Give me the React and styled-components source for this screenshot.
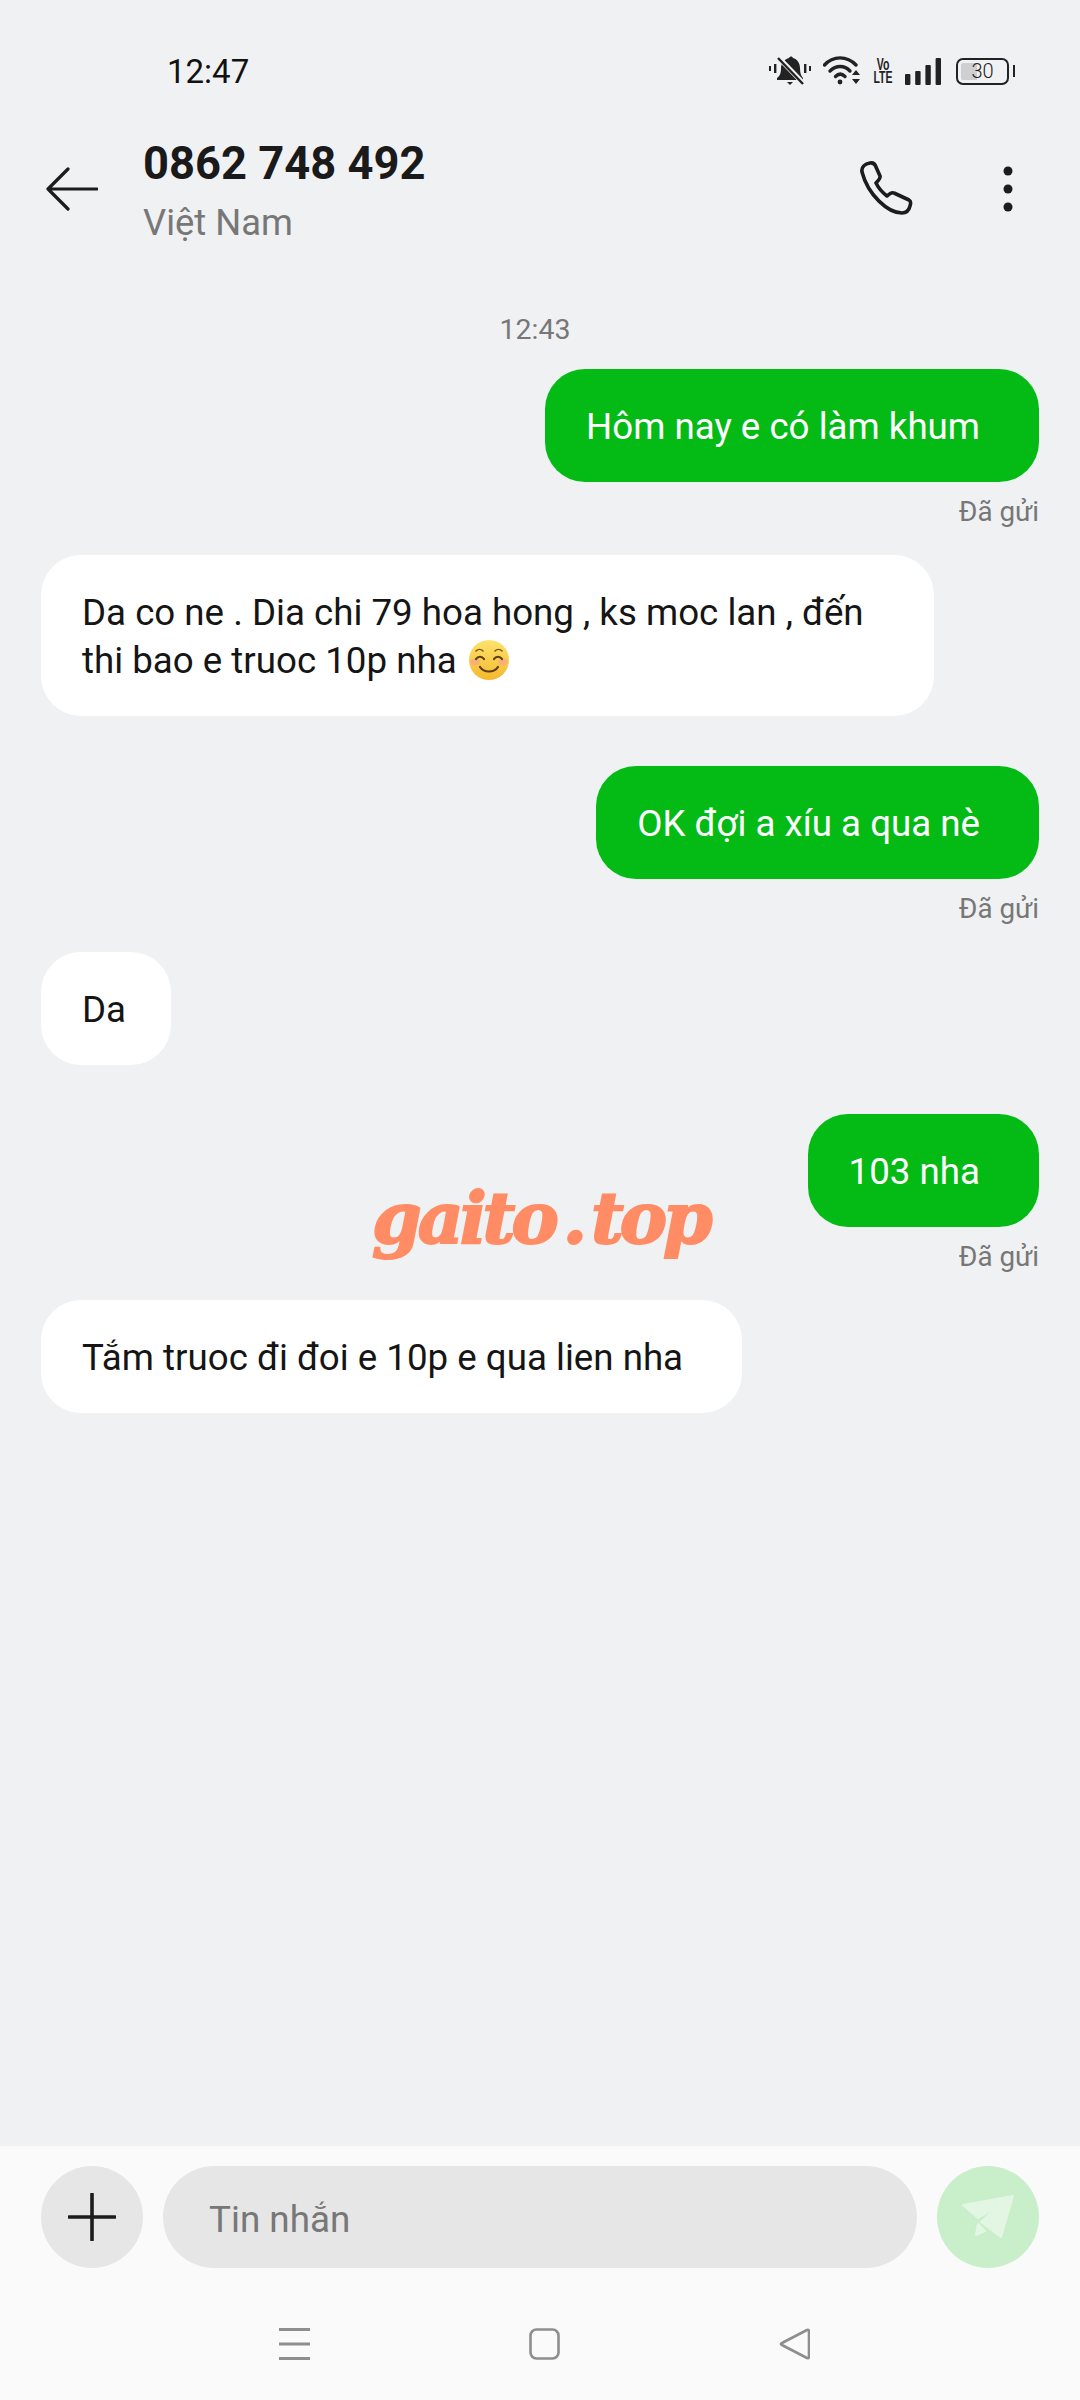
import React from 'react'
import styled, { createGlobalStyle } from 'styled-components'

const GlobalStyle = createGlobalStyle`
  * { box-sizing: border-box; }
  html, body { margin: 0; padding: 0; background: #f0f1f3; }
  body { font-family: Roboto, "Liberation Sans", sans-serif; }
`

const Screen = styled.div`
  position: relative;
  width: 1080px;
  height: 2400px;
  display: flex;
  flex-direction: column;
  background: #f0f1f3;
  overflow: hidden;
`
const StatusBar = styled.div`
  height: 126px;
  flex: none;
  display: flex;
  justify-content: space-between;
  align-items: flex-start;
  padding: 52px 67px 0 167px;
`
const Clock = styled.div`
  font-size: 33px;
  line-height: 39px;
  color: #111;
`
const StatusIcons = styled.div`
  display: flex;
  align-items: center;
  gap: 12px;
  margin-top: 4px;
`
const VoLte = styled.div`
  width: 32px;
  margin: 0 -6px;
  font-family: "Liberation Sans", sans-serif;
  font-weight: 700;
  font-size: 17px;
  line-height: 13.5px;
  text-align: center;
  color: #222;
  transform: scaleX(0.62);
`
const Battery = styled.div`
  position: relative;
  width: 53px;
  height: 27px;
  border: 2.5px solid #222;
  border-radius: 7px;
  margin-left: 2px;
  margin-right: 4px;
  background: linear-gradient(90deg, #cfcfd1 0 38%, transparent 38%);
  background-origin: content-box;
  background-clip: content-box;
  padding: 3px;
  display: flex;
  align-items: center;
  justify-content: center;
  font-size: 20px;
  font-weight: 300;
  color: #222;
  &::after {
    content: '';
    position: absolute;
    right: -8px;
    top: 5px;
    width: 2.5px;
    height: 12px;
    background: #222;
  }
`
const Header = styled.div`
  height: 114px;
  flex: none;
  display: flex;
  align-items: flex-start;
  padding: 0 67px 0 46px;
`
const BackButton = styled.div`
  width: 97px;
  flex: none;
  padding-top: 41px;
  display: flex;
`
const Contact = styled.div`
  flex: 1;
  display: flex;
  flex-direction: column;
`
const Phone = styled.div`
  font-size: 45.3px;
  line-height: 54px;
  font-weight: 700;
  color: #1a1a1a;
  margin-top: 11px;
`
const Country = styled.div`
  font-size: 36.4px;
  line-height: 44px;
  color: #777;
  margin-top: 10px;
`
const HeaderActions = styled.div`
  display: flex;
  align-items: center;
  gap: 87px;
  padding-top: 35px;
`
const Thread = styled.div`
  flex: 1;
  display: flex;
  flex-direction: column;
  padding: 74px 41px 0;
`
const Time = styled.div`
  align-self: center;
  font-size: 28.5px;
  line-height: 32px;
  color: #777;
  margin-right: 10px;
  margin-bottom: 23px;
`
const Bubble = styled.div`
  align-self: ${p => (p.$sent ? 'flex-end' : 'flex-start')};
  max-width: 893px;
  padding: 34px ${p => (p.$short ? '45px' : '59px')} 31px 41px;
  border-radius: 40px;
  font-size: 36.7px;
  line-height: 48px;
  background: ${p => (p.$sent ? '#04bb16' : '#fff')};
  color: ${p => (p.$sent ? '#fff' : '#151515')};
  margin-bottom: ${p => (p.$sent ? '0' : '49.5px')};
`
const SentLabel = styled.div`
  align-self: flex-end;
  font-size: 27.8px;
  line-height: 32px;
  color: #777;
  margin-top: 14px;
  margin-bottom: 27px;
`
const Emoji = styled.svg`
  display: inline-block;
  width: 42px;
  height: 42px;
  vertical-align: -8px;
  margin-left: 2px;
`
const Watermark = styled.div`
  position: absolute;
  left: 372px;
  top: 1168px;
  font-family: "DejaVu Serif", serif;
  font-style: italic;
  font-weight: 700;
  font-size: 71px;
  line-height: 100px;
  letter-spacing: -4px;
  word-spacing: -13px;
  white-space: nowrap;
  color: #ff8c64;
  -webkit-text-stroke: 2px #ff8c64;
`
const Composer = styled.div`
  flex: none;
  height: 254px;
  background: #fafafa;
  display: flex;
  flex-direction: column;
  padding: 20px 41px 0;
`
const InputRow = styled.div`
  display: flex;
  gap: 20px;
  align-items: center;
`
const RoundButton = styled.div`
  width: 102px;
  height: 102px;
  flex: none;
  border-radius: 50%;
  display: flex;
  align-items: center;
  justify-content: center;
  background: ${p => (p.$send ? '#c9efca' : '#e6e6e6')};
`
const Input = styled.div`
  flex: 1;
  height: 102px;
  border-radius: 51px;
  background: #e6e6e6;
  padding: 5px 0 0 46px;
  display: flex;
  align-items: center;
  font-size: 36.8px;
  color: #777;
`
const NavBar = styled.div`
  display: flex;
  justify-content: center;
  align-items: center;
  gap: 219px;
  margin-top: 60px;
  padding-left: 9px;
`

const IconBack = () => (
  <svg width="52" height="44" viewBox="0 0 52 44" fill="none" stroke="#1c1c1c" strokeWidth="3.2" strokeLinecap="round" strokeLinejoin="round">
    <path d="M51 22H2M22 2 2 22l20 20" />
  </svg>
)
const IconCall = () => (
  <svg width="56" height="56" viewBox="0 0 56 56" fill="none" stroke="#1c1c1c" strokeWidth="3.6" strokeLinejoin="round">
    <path d="M2 11C1 6 5 3 10 2c3-.6 5 1 6 4l4 9c.6 2-1 4-4 7 3 6 7 10 11 13 3-3 5-4 7-3l15 7c2 1 2 3 1 6-1 4-4 7-8 7C28 52 8 34 2 11Z" />
  </svg>
)
const IconDots = () => (
  <svg width="10" height="46" viewBox="0 0 10 46" fill="#1c1c1c">
    <circle cx="5" cy="5" r="4.5" />
    <circle cx="5" cy="23" r="4.5" />
    <circle cx="5" cy="41" r="4.5" />
  </svg>
)
const IconMuted = () => (
  <svg width="42" height="30" viewBox="0 0 42 30" fill="#222">
    <path d="M8 22c3-2 4-5 4-10 0-5 4-9 8-10 1-2 3-2 4 0 4 1 7 5 7 10 0 5 1 8 3 10v2H8Z" />
    <path d="M18 26h6l-3 3Z" />
    <rect x="0" y="10" width="2" height="5" />
    <rect x="5" y="8" width="2.4" height="9" />
    <rect x="35" y="8" width="2.4" height="9" />
    <rect x="40" y="10" width="2" height="5" />
    <path d="M9 1 34 27" stroke="#f0f1f3" strokeWidth="5" />
    <path d="M9 2 34 28" stroke="#222" strokeWidth="2.4" />
  </svg>
)
const IconWifi = () => (
  <svg width="38" height="30" viewBox="0 0 38 30" fill="none" stroke="#222" strokeWidth="3.4" strokeLinecap="round">
    <path d="M1.5 9C10-.5 24-.5 33 9" />
    <path d="M7 15c6-6 14.500-6 20 0" />
    <path d="M12.500 20.500c3-3 6.500-3 9.500 0" />
    <circle cx="17" cy="26" r="2.400" fill="#222" stroke="none" />
    <path d="M29 19h8l-4-5ZM29 23h8l-4 5Z" fill="#222" stroke="none" />
  </svg>
)
const IconSignal = () => (
  <svg width="37" height="27" viewBox="0 0 37 27" fill="#222">
    <rect x="0" y="16" width="5.400" height="11" rx="1" />
    <rect x="10.200" y="13" width="5.400" height="14" rx="1" />
    <rect x="20.400" y="7" width="5.400" height="20" rx="1" />
    <rect x="30.600" y="0" width="5.400" height="27" rx="1" />
  </svg>
)
const IconPlus = () => (
  <svg width="48" height="48" viewBox="0 0 48 48" stroke="#1c1c1c" strokeWidth="3.6" strokeLinecap="round">
    <path d="M24 1v46M1 24h46" />
  </svg>
)
const IconSend = () => (
  <svg width="58" height="48" viewBox="0 0 58 48" fill="#e2f6e3" stroke="#e2f6e3" strokeWidth="2" strokeLinejoin="round">
    <path d="M54 3 4 12l15 13 18-10-15 14 20 15Z" />
    <path d="M17 42l2-11 7 7Z" />
  </svg>
)
const IconMenu = () => (
  <svg width="31" height="32" viewBox="0 0 31 32" fill="#8e8e8e">
    <rect y="0" width="31" height="3" />
    <rect y="14.500" width="31" height="3" />
    <rect y="29" width="31" height="3" />
  </svg>
)
const IconHome = () => (
  <svg width="31" height="32" viewBox="0 0 31 32" fill="none" stroke="#8e8e8e" strokeWidth="2.6">
    <rect x="1.500" y="1.500" width="28" height="29" rx="6" />
  </svg>
)
const IconTriangle = () => (
  <svg width="31" height="32" viewBox="0 0 31 32" fill="none" stroke="#8e8e8e" strokeWidth="2.6" strokeLinejoin="round">
    <path d="M28 2c1-.6 2 0 2 1v26c0 1-1 1.600-2 1L3 17c-1.500-.6-1.500-1.500 0-2Z" />
  </svg>
)
const SmileEmoji = () => (
  <Emoji viewBox="0 0 42 42">
    <defs>
      <linearGradient id="smileFace" x1="0" y1="0" x2="0" y2="1">
        <stop offset="0" stopColor="#fde36c" />
        <stop offset="1" stopColor="#f5b82e" />
      </linearGradient>
    </defs>
    <circle cx="21" cy="21" r="20" fill="url(#smileFace)" />
    <ellipse cx="7" cy="23" rx="5" ry="3.500" fill="#f6a58a" opacity="0.7" />
    <ellipse cx="35" cy="23" rx="5" ry="3.500" fill="#f6a58a" opacity="0.7" />
    <path d="M8 12c2-2 5-2 7 0M27 12c2-2 5-2 7 0" fill="none" stroke="#7a5518" strokeWidth="1.600" strokeLinecap="round" />
    <path d="M8 20c2-3 6-3 8 0M26 20c2-3 6-3 8 0M12 28c4 6 14 6 18 0" fill="none" stroke="#5c3d14" strokeWidth="2.200" strokeLinecap="round" />
  </Emoji>
)

const messages = [
  { id: 1, sent: true, text: 'Hôm nay e có làm khum' },
  { id: 2, text: 'Da co ne . Dia chi 79 hoa hong , ks moc lan , đến thi bao e truoc 10p nha', emoji: true },
  { id: 3, sent: true, text: 'OK đợi a xíu a qua nè' },
  { id: 4, text: 'Da', short: true },
  { id: 5, sent: true, text: '103 nha' },
  { id: 6, text: 'Tắm truoc đi đoi e 10p e qua lien nha' },
]

export default function App() {
  return (
    <Screen>
      <GlobalStyle />
      <StatusBar>
        <Clock>12:47</Clock>
        <StatusIcons>
          <IconMuted />
          <IconWifi />
          <VoLte>Vo<br />LTE</VoLte>
          <IconSignal />
          <Battery>30</Battery>
        </StatusIcons>
      </StatusBar>
      <Header>
        <BackButton><IconBack /></BackButton>
        <Contact>
          <Phone>0862 748 492</Phone>
          <Country>Việt Nam</Country>
        </Contact>
        <HeaderActions>
          <IconCall />
          <IconDots />
        </HeaderActions>
      </Header>
      <Thread>
        <Time>12:43</Time>
        {messages.map(m => (
          <React.Fragment key={m.id}>
            <Bubble $sent={m.sent} $short={m.short}>
              {m.text}
              {m.emoji && <> <SmileEmoji /></>}
            </Bubble>
            {m.sent && <SentLabel>Đã gửi</SentLabel>}
          </React.Fragment>
        ))}
      </Thread>
      <Watermark>gaito . top</Watermark>
      <Composer>
        <InputRow>
          <RoundButton><IconPlus /></RoundButton>
          <Input>Tin nhắn</Input>
          <RoundButton $send><IconSend /></RoundButton>
        </InputRow>
        <NavBar>
          <IconMenu />
          <IconHome />
          <IconTriangle />
        </NavBar>
      </Composer>
    </Screen>
  )
}
